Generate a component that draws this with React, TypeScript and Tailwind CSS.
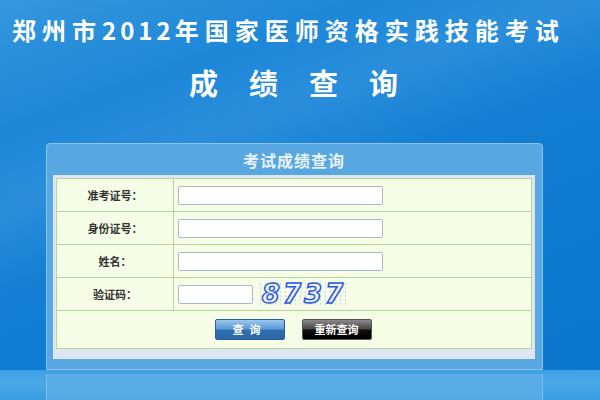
const cjk = "font-['Noto_Sans_CJK_SC','Noto_Sans',sans-serif]";

const rows = [
    { label: '准考证号：', kind: 'text' },
    { label: '身份证号：', kind: 'text' },
    { label: '姓名：', kind: 'text' },
    { label: '验证码：', kind: 'code' },
];

function Captcha() {
    return (
        <div className="ml-[5px] flex h-[24px] w-[92px] items-center justify-center bg-[radial-gradient(circle,#c9d3f5_0.6px,transparent_0.8px)] bg-[length:5px_4px]">
            <span className="font-['DejaVu_Sans',sans-serif] text-[26px] leading-none font-bold italic tracking-[3px] text-[#eef2ff] [-webkit-text-stroke:1.5px_#2a58e0]">
                8737
            </span>
        </div>
    );
}

export default function App() {
    return (
        <div className={`${cjk} h-[400px] w-[600px] overflow-hidden bg-[linear-gradient(160deg,#3597de_0%,#1d87d8_22%,#2a8edb_34%,#147fd4_48%,#0d7bd0_70%,#0a77cc_100%)]`}>
            <h1 className="pt-[16px] pl-[12px] text-[24px] leading-[28px] font-bold tracking-[6px] whitespace-nowrap text-white">
                郑州市<span className="tracking-[4px]">2012</span>年国家医师资格实践技能考试
            </h1>
            <h2 className="mt-[22px] pl-[189px] text-[29px] leading-[32px] font-bold tracking-[31px] text-white">
                成绩查询
            </h2>

            <div className="mt-[45px] ml-[46px] h-[227px] w-[497px] rounded-t-[4px] border border-[#8cc3ec] bg-[#58a7e1] pr-[7px] pb-[7px] pl-[6px]">
                <div className="flex h-[31px] items-center justify-center text-[16px] font-bold tracking-[1px] text-[#e9f3fb]">
                    考试成绩查询
                </div>
                <div className="bg-[#dfe6f3] px-[3px] pt-[3px] pb-[10px]">
                    <div className="grid grid-cols-[117px_1fr] border border-[#b3d79a] bg-[#f5fde6]">
                        {rows.map(({ label, kind }) => (
                            <div key={label} className="contents">
                                <div className="flex h-[33px] items-center justify-center border-r border-b border-[#b3d79a] text-[11px] font-bold text-[#333]">
                                    {label}
                                </div>
                                <div className="flex h-[33px] items-center border-b border-[#b3d79a] pl-[4px]">
                                    {kind === 'text' ? (
                                        <input className="h-[19px] w-[205px] rounded-[2px] border border-[#a9b7c9] bg-white" />
                                    ) : (
                                        <>
                                            <input className="h-[19px] w-[75px] rounded-[2px] border border-[#a9b7c9] bg-white" />
                                            <Captcha />
                                        </>
                                    )}
                                </div>
                            </div>
                        ))}
                        <div className="col-span-2 flex h-[37px] items-center justify-center gap-[17px] pr-[2px]">
                            <button className="h-[21px] w-[70px] rounded-[2px] border border-[#2c5f95] bg-[linear-gradient(180deg,#9cc8ef_0%,#5d9ad4_45%,#2f6eb2_55%,#2a66a8_100%)] text-[11px] font-bold tracking-[6px] text-white">
                                查询
                            </button>
                            <button className="h-[21px] w-[70px] rounded-[2px] border border-[#555] bg-[linear-gradient(180deg,#8a8a8a_0%,#4a4a4a_45%,#0d0d0d_55%,#000_100%)] text-[11px] font-bold text-white">
                                重新查询
                            </button>
                        </div>
                    </div>
                </div>
            </div>

            <div className="h-[30px] bg-[linear-gradient(180deg,#3ea0e4_0%,#4aa8e8_40%,#3b9ee2_100%)] pt-[4px]">
                <div className="ml-[46px] h-[26px] w-[497px] border-x border-[#7fbbeb] bg-[linear-gradient(180deg,#5aade6,#55aae5)]" />
            </div>
        </div>
    );
}
